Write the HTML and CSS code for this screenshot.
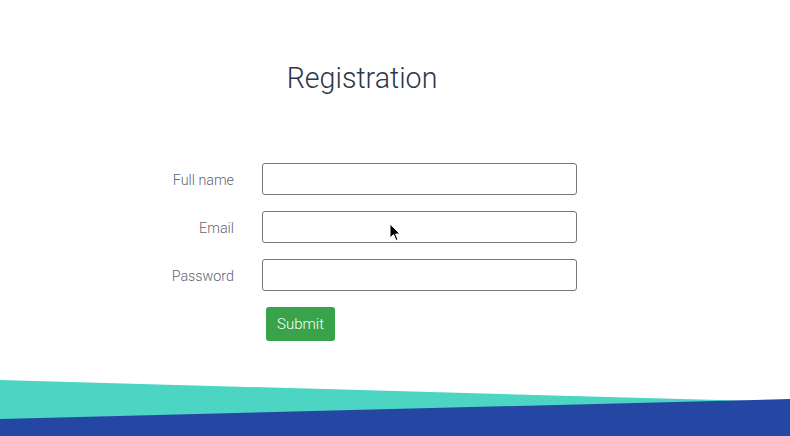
FILE: index.html
```html
<!DOCTYPE html>
<html>
<head>
<meta charset="utf-8">
<link rel="stylesheet" href="styles.css">
</head>
<body>
<main class="page">
  <section class="card">
    <h1 class="title">Registration</h1>
    <form class="form">
      <div class="row">
        <label class="label">Full name</label>
        <input class="input" type="text">
      </div>
      <div class="row">
        <label class="label">Email</label>
        <input class="input" type="email">
      </div>
      <div class="row">
        <label class="label">Password</label>
        <input class="input" type="password">
      </div>
      <div class="row">
        <span class="label"></span>
        <button class="submit" type="button">Submit</button>
      </div>
    </form>
  </section>
  <div class="waves">
    <svg class="waves-svg" viewBox="0 0 790 56" preserveAspectRatio="none" width="790" height="56">
      <polygon points="0,0 790,22 790,56 0,56" fill="#4dd5c3"/>
      <polygon points="0,39 790,19 790,56 0,56" fill="#2447a3"/>
    </svg>
  </div>
  <svg class="cursor" width="14" height="20" viewBox="0 0 14 20">
    <path d="M1 1 L1 15 L4.5 11.5 L7 17.5 L9 16.6 L6.6 11 L11 11 Z" fill="#000" stroke="#fff" stroke-width="1"/>
  </svg>
</main>
</body>
</html>
```
FILE: styles.css
```css
html, body {
  margin: 0;
  padding: 0;
  background: #ffffff;
}
.page {
  position: relative;
  width: 790px;
  height: 436px;
  overflow: hidden;
  font-family: Roboto, "Noto Sans", sans-serif;
  display: flex;
  flex-direction: column;
}
.card {
  width: 430px;
  margin-left: 147px;
  flex: 1;
}
.title {
  margin: 0;
  padding-top: 58px;
  font-size: 28.6px;
  font-weight: 300;
  line-height: 40px;
  color: #2d3748;
  text-align: center;
}
.form {
  margin-top: 65px;
  display: flex;
  flex-direction: column;
  gap: 16px;
}
.row {
  display: flex;
  align-items: center;
  gap: 28px;
}
.label {
  width: 87px;
  text-align: right;
  font-size: 14.3px;
  font-weight: 300;
  color: #5f6673;
  padding-top: 2px;
}
.input {
  box-sizing: border-box;
  width: 315px;
  height: 32px;
  margin: 0;
  border: 1px solid #737880;
  border-radius: 3px;
  background: #fff;
  outline: none;
}
.submit {
  margin: 0 0 0 4px;
  height: 34px;
  width: 69px;
  padding: 0;
  border: none;
  border-radius: 3px;
  background: #38a34a;
  color: #ffffff;
  font-family: Roboto, "Noto Sans", sans-serif;
  font-size: 15px;
  font-weight: 300;
}
.waves {
  height: 56px;
  line-height: 0;
}
.waves-svg {
  display: block;
}
.cursor {
  position: absolute;
  left: 389px;
  top: 223px;
}
```
